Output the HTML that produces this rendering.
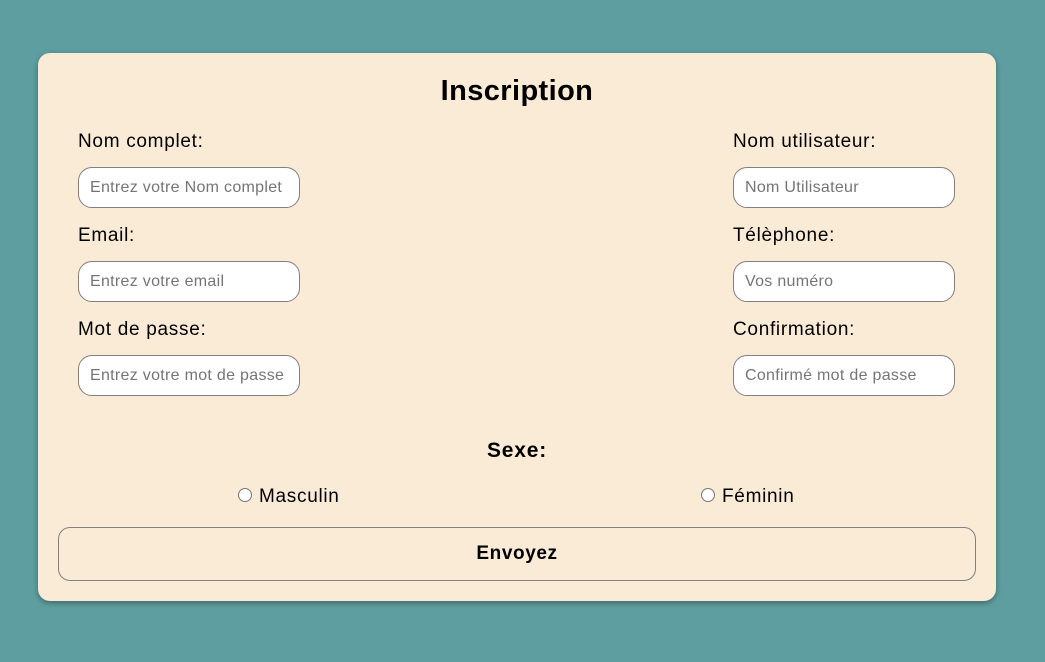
<!DOCTYPE html>
<html><head><meta charset="utf-8"><style>
*{box-sizing:border-box;margin:0;padding:0}
body{width:1045px;height:662px;background:#5f9ea0;font-family:"Liberation Sans",sans-serif;position:relative;overflow:hidden}
.card{position:absolute;left:38px;top:53px;width:958px;height:548px;background:#faebd7;border-radius:12px;box-shadow:0 2px 6px rgba(0,0,0,.35)}
.a{position:absolute;color:#000;white-space:nowrap}
h1{position:absolute;left:0;width:958px;top:22px;text-align:center;font-size:29px;font-weight:bold;letter-spacing:.4px}
.l{font-size:19px;letter-spacing:.7px}
.i{position:absolute;width:222px;height:41px;background:#fff;border:1px solid #808080;border-radius:14px;font-size:16px;letter-spacing:.3px;color:#757575;padding:11px 0 0 11px;white-space:nowrap;overflow:hidden}
.r{position:absolute;width:14px;height:14px;border:1px solid #767676;border-radius:50%;background:#fff}
.btn{position:absolute;left:20px;top:474px;width:918px;height:54px;border:1px solid #808080;border-radius:12px;text-align:center;line-height:52px;font-weight:bold;font-size:19px;letter-spacing:.6px}
</style></head><body>
<div class="card">
<h1>Inscription</h1>
<div class="a l" style="left:40px;top:78px">Nom complet:</div>
<div class="i" style="left:40px;top:114px">Entrez votre Nom complet</div>
<div class="a l" style="left:40px;top:172px">Email:</div>
<div class="i" style="left:40px;top:208px">Entrez votre email</div>
<div class="a l" style="left:40px;top:266px">Mot de passe:</div>
<div class="i" style="left:40px;top:302px">Entrez votre mot de passe</div>
<div class="a l" style="left:695px;top:78px">Nom utilisateur:</div>
<div class="i" style="left:695px;top:114px">Nom Utilisateur</div>
<div class="a l" style="left:695px;top:172px">Télèphone:</div>
<div class="i" style="left:695px;top:208px">Vos numéro</div>
<div class="a l" style="left:695px;top:266px">Confirmation:</div>
<div class="i" style="left:695px;top:302px">Confirmé mot de passe</div>
<div class="a" style="left:0;width:958px;text-align:center;top:386px;font-size:21px;font-weight:bold;letter-spacing:.8px">Sexe:</div>
<div class="r" style="left:200px;top:435px"></div>
<div class="a l" style="left:221px;top:433px">Masculin</div>
<div class="r" style="left:663px;top:435px"></div>
<div class="a l" style="left:684px;top:433px">Féminin</div>
<div class="btn">Envoyez</div>
</div>
</body></html>
